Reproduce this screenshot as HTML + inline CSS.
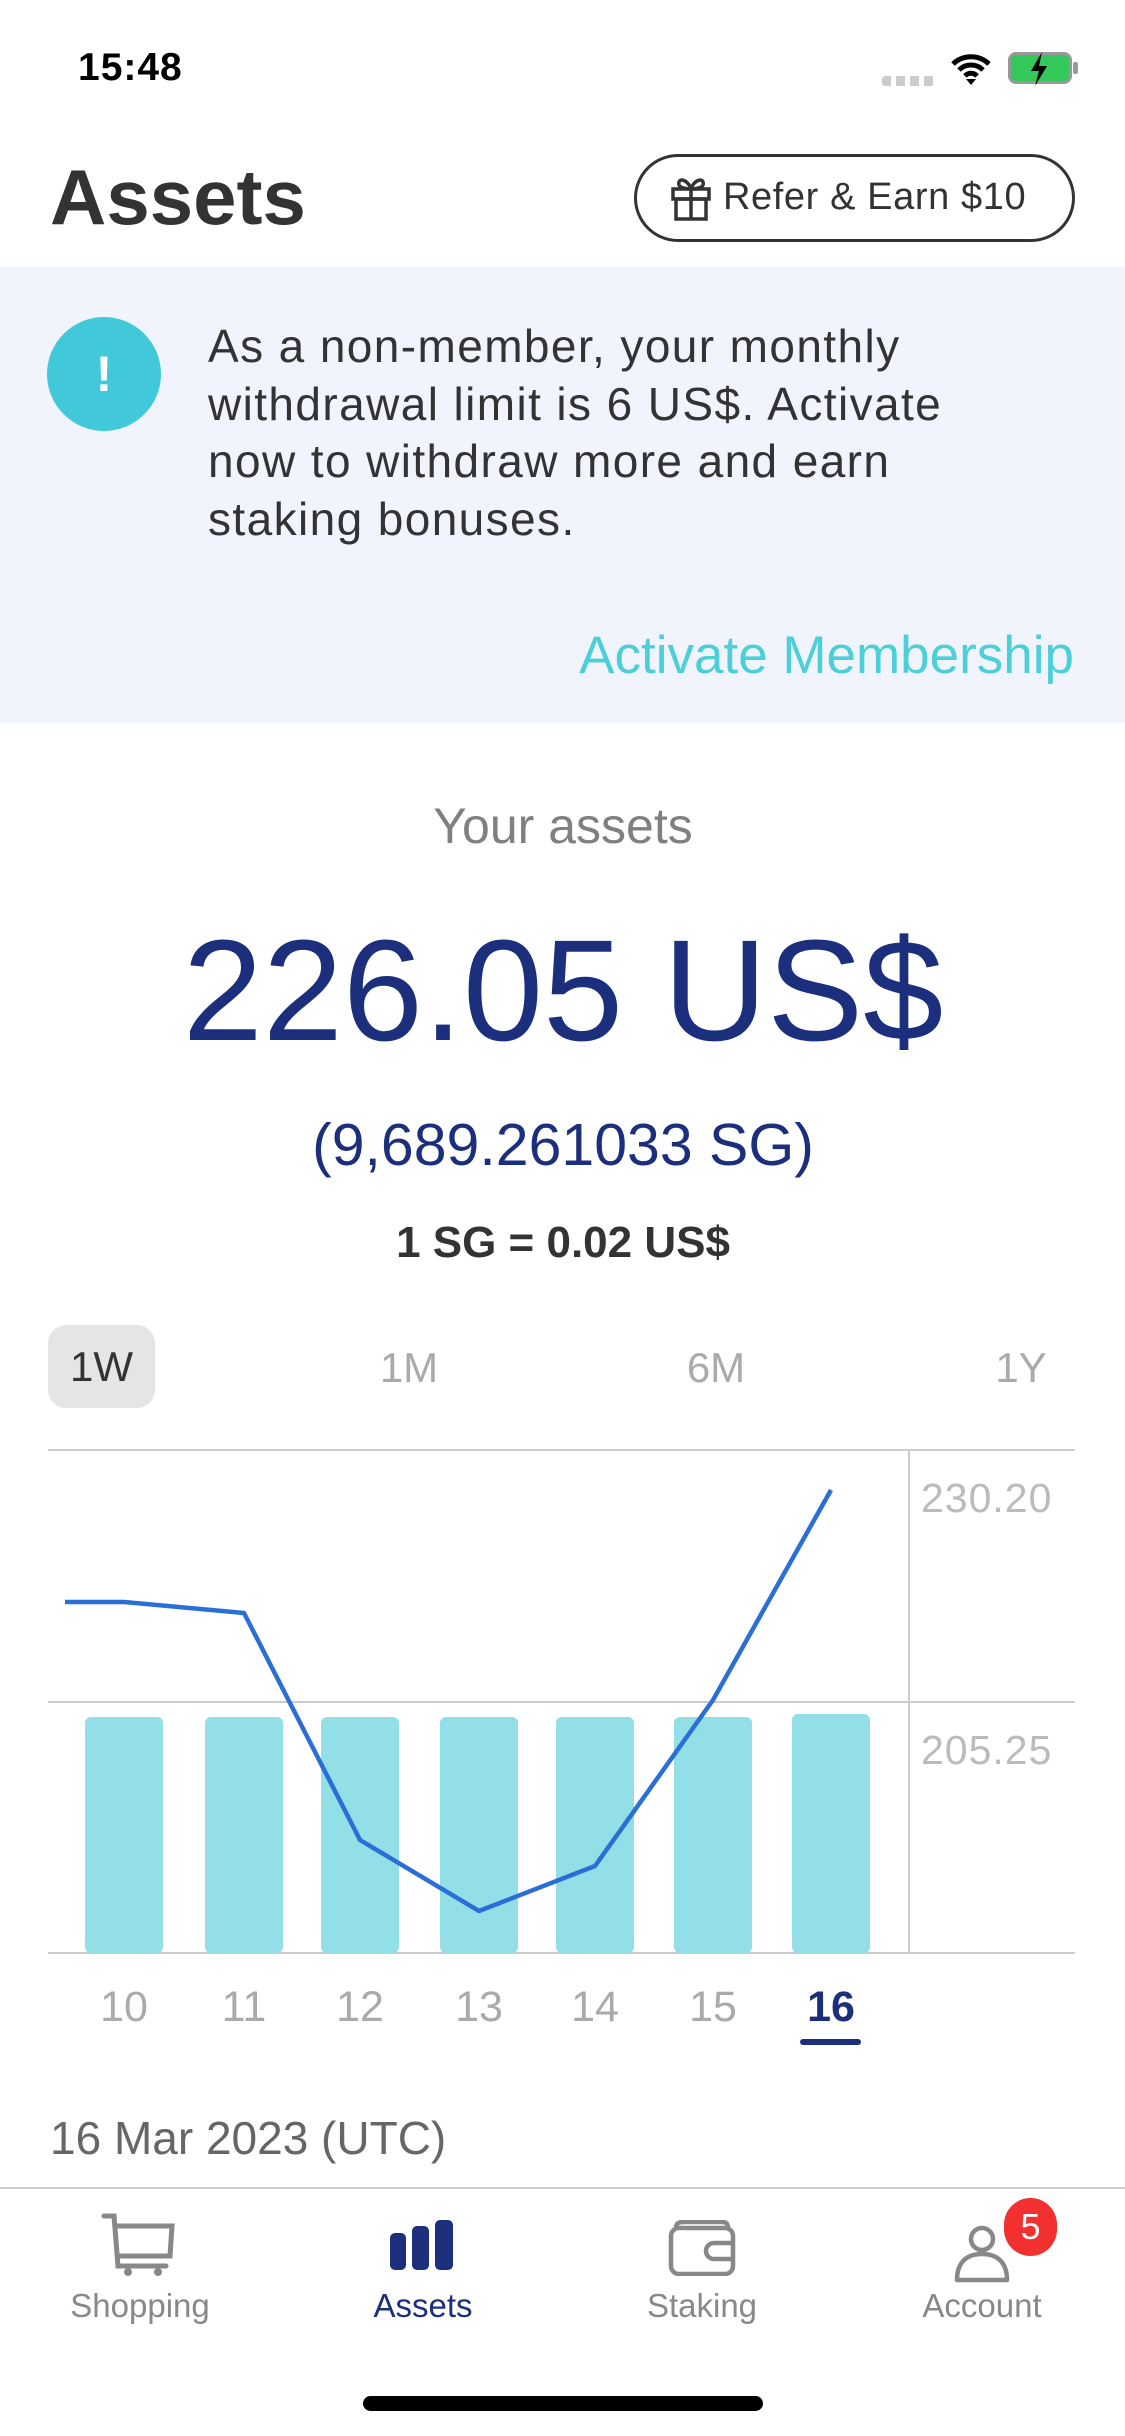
<!DOCTYPE html>
<html><head><meta charset="utf-8"><style>
*{margin:0;padding:0;box-sizing:border-box}
body{width:1125px;height:2436px;background:#fff;font-family:"Liberation Sans",sans-serif;position:relative;overflow:hidden;color:#333}
.a{position:absolute;white-space:nowrap}
.c{transform:translateX(-50%)}
</style></head><body>
<div class="a" style="left:78px;top:46px;font-size:39px;font-weight:bold;color:#000;letter-spacing:1px">15:48</div>
<div class="a" style="left:882px;top:76px;width:52px;height:10px;background:repeating-linear-gradient(90deg,#ccc 0 9px,transparent 9px 14px);border-radius:3px"></div>
<svg class="a" style="left:950px;top:52px" width="42" height="34" viewBox="0 0 42 34"><path d="M3 12a26 26 0 0 1 36 0M9 18a17 17 0 0 1 24 0M15 24a8 8 0 0 1 12 0" stroke="#000" stroke-width="5" fill="none"/><path d="M21 33l-5-6h10z" fill="#000"/></svg>
<div class="a" style="left:1008px;top:52px;width:64px;height:32px;border:3px solid #999;border-radius:8px;background:#34c759"></div>
<div class="a" style="left:1073px;top:62px;width:5px;height:12px;background:#999;border-radius:2px"></div>
<svg class="a" style="left:1026px;top:50px" width="26" height="38" viewBox="0 0 26 38"><path d="M16 2L5 21h8l-4 15 12-20h-8z" fill="#000"/></svg>
<div class="a" style="left:50px;top:152px;font-size:78px;font-weight:bold;color:#333">Assets</div>
<div class="a" style="left:634px;top:154px;width:441px;height:88px;border:3px solid #333;border-radius:44px"></div>
<svg class="a" style="left:669px;top:175px" width="44" height="46" viewBox="0 0 44 46"><g fill="none" stroke="#333" stroke-width="3.5"><rect x="4" y="14" width="36" height="10"/><rect x="7" y="24" width="30" height="20"/><path d="M22 14v30M22 14c-3-10-14-12-12-4 1 3 8 4 12 4M22 14c3-10 14-12 12-4-1 3-8 4-12 4"/></g></svg>
<div class="a" style="left:723px;top:176px;font-size:38px;color:#333;letter-spacing:0.6px">Refer &amp; Earn $10</div>
<div class="a" style="left:0;top:267px;width:1125px;height:456px;background:#f1f4fd"></div>
<div class="a" style="left:47px;top:317px;width:114px;height:114px;border-radius:50%;background:#41c9d9;color:#fff;font-size:50px;font-weight:bold;text-align:center;line-height:114px">!</div>
<div class="a" style="left:208px;top:318px;font-size:46px;line-height:57.5px;color:#333;letter-spacing:1.4px">As a non-member, your monthly<br>withdrawal limit is 6 US$. Activate<br>now to withdraw more and earn<br>staking bonuses.</div>
<div class="a" style="right:51px;top:625px;font-size:53px;color:#4dcfda">Activate Membership</div>
<div class="a c" style="left:563px;top:797px;font-size:50px;color:#808080">Your assets</div>
<div class="a c" style="left:563px;top:908px;font-size:144px;color:#1b2f7c">226.05 US$</div>
<div class="a c" style="left:563px;top:1111px;font-size:59px;color:#1b2f7c">(9,689.261033 SG)</div>
<div class="a c" style="left:563px;top:1218px;font-size:44px;font-weight:bold;color:#333">1 SG = 0.02 US$</div>
<div class="a" style="left:48px;top:1325px;width:107px;height:83px;background:#e5e5e5;border-radius:18px;text-align:center;line-height:83px;font-size:42px;color:#333">1W</div>
<div class="a c" style="left:409px;top:1344px;font-size:42px;color:#aaa">1M</div>
<div class="a c" style="left:716px;top:1344px;font-size:42px;color:#aaa">6M</div>
<div class="a c" style="left:1021px;top:1344px;font-size:42px;color:#aaa">1Y</div>
<svg class="a" style="left:0;top:0" width="1125" height="2100">
<g stroke="#ccc" stroke-width="2"><line x1="48" y1="1450" x2="1075" y2="1450"/><line x1="48" y1="1702" x2="1075" y2="1702"/><line x1="48" y1="1953" x2="1075" y2="1953"/><line x1="909" y1="1450" x2="909" y2="1953"/></g>
<g fill="#92dfe7"><rect x="85" y="1717" width="78" height="236" rx="6"/><rect x="205" y="1717" width="78" height="236" rx="6"/><rect x="321" y="1717" width="78" height="236" rx="6"/><rect x="440" y="1717" width="78" height="236" rx="6"/><rect x="556" y="1717" width="78" height="236" rx="6"/><rect x="674" y="1717" width="78" height="236" rx="6"/><rect x="792" y="1714" width="78" height="239" rx="6"/></g>
<polyline points="65,1602 124,1602 244,1613 360,1840 479,1911 595,1866 713,1700 831,1490" fill="none" stroke="#2a6fd6" stroke-width="4.5" stroke-linejoin="round"/>
<g font-size="41" fill="#bbb" font-family="Liberation Sans" letter-spacing="1"><text x="921" y="1512">230.20</text><text x="921" y="1764">205.25</text></g>
<g font-size="43" fill="#aaa" font-family="Liberation Sans" text-anchor="middle"><text x="124" y="2021">10</text><text x="244" y="2021">11</text><text x="360" y="2021">12</text><text x="479" y="2021">13</text><text x="595" y="2021">14</text><text x="713" y="2021">15</text><text x="831" y="2021" fill="#1b2f7c" font-weight="bold">16</text></g>
<rect x="800" y="2039" width="61" height="6" rx="3" fill="#1b2f7c"/>
</svg>
<div class="a" style="left:50px;top:2111px;font-size:46px;color:#666">16 Mar 2023 (UTC)</div>
<div class="a" style="left:0;top:2187px;width:1125px;height:2px;background:#ccc"></div>
<svg class="a" style="left:100px;top:2212px" width="80" height="66" viewBox="0 0 80 66"><g fill="none" stroke="#888" stroke-width="5" stroke-linecap="round"><path d="M4 4h10l4 50h48M16 14h56l-2 30H18"/></g><circle cx="28" cy="60" r="4" fill="#888"/><circle cx="58" cy="60" r="4" fill="#888"/></svg>
<svg class="a" style="left:388px;top:2220px" width="70" height="50"><rect x="2" y="13" width="16" height="37" rx="5" fill="#1b2f7c"/><rect x="24" y="6" width="17" height="44" rx="5" fill="#1b2f7c"/><rect x="47" y="0" width="18" height="50" rx="5" fill="#1b2f7c"/></svg>
<svg class="a" style="left:668px;top:2220px" width="70" height="56"><g fill="none" stroke="#888" stroke-width="4.5"><rect x="3" y="8" width="62" height="46" rx="8"/><path d="M8 8c0-6 4-6 10-6h36c6 0 6 4 6 6"/><path d="M65 23H46a8 8 0 0 0 0 16h19"/></g></svg>
<svg class="a" style="left:952px;top:2225px" width="60" height="60"><g fill="none" stroke="#888" stroke-width="4.5"><circle cx="30" cy="14" r="11"/><path d="M5 55c0-18 10-26 25-26s25 8 25 26z" stroke-linejoin="round"/></g></svg>
<div class="a" style="left:1004px;top:2198px;width:53px;height:58px;border-radius:27px;background:#f23030;color:#fff;font-size:36px;text-align:center;line-height:58px">5</div>
<div class="a c" style="left:140px;top:2287px;font-size:33px;color:#888">Shopping</div>
<div class="a c" style="left:423px;top:2287px;font-size:33px;color:#1b2f7c">Assets</div>
<div class="a c" style="left:702px;top:2287px;font-size:33px;color:#888">Staking</div>
<div class="a c" style="left:982px;top:2287px;font-size:33px;color:#888">Account</div>
<div class="a" style="left:363px;top:2396px;width:400px;height:15px;border-radius:8px;background:#000"></div>
</body></html>
